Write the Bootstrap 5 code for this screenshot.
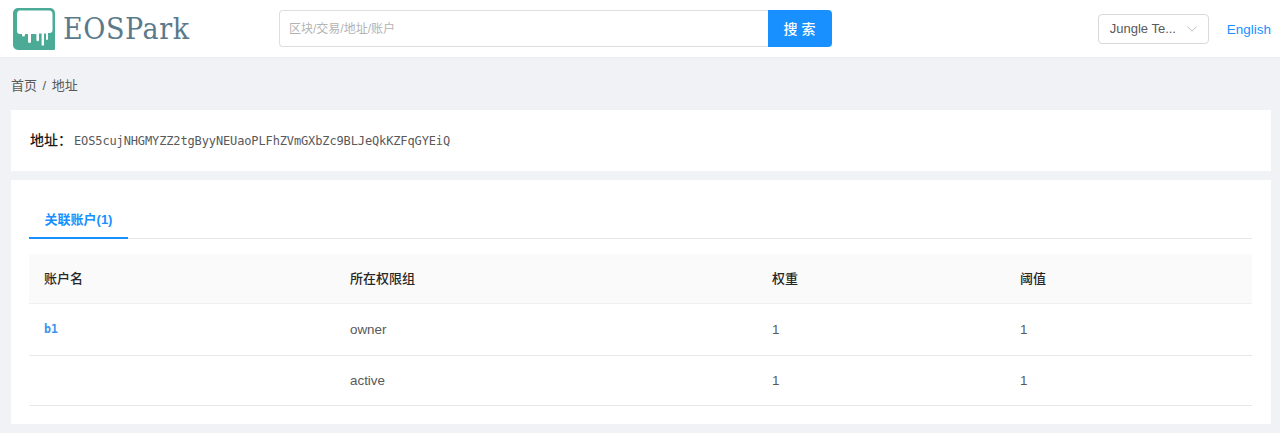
<!DOCTYPE html>
<html lang="zh">
<head>
<meta charset="utf-8">
<title>EOSPark</title>
<link rel="stylesheet" href="https://cdn.jsdelivr.net/npm/bootstrap@5.3.0/dist/css/bootstrap.min.css">
<style>
html,body{height:433px;overflow:hidden}
body{background:#f0f2f5;font-family:"Liberation Sans","Noto Sans CJK SC",sans-serif;font-size:13px;color:#595959}
.top-bar{height:57px;background:#fff;box-shadow:0 1px 2px rgba(0,0,0,.03);padding:0 9px 0 13px}
.brand-name{font-family:"DejaVu Serif Condensed","DejaVu Serif",serif;font-stretch:condensed;font-weight:400;font-size:30px;line-height:40px;color:#5a7a8b;margin-left:8px;white-space:nowrap;letter-spacing:.6px}
.brand-area{width:266px}
.search-box{width:553px;height:37px}
.search-input{flex:1;border:1px solid #dedede;border-right:0;border-radius:4px 0 0 4px;padding:1px 9px 0;font-size:12px;color:#b3b3b3;line-height:35px;background:#fff}
.search-btn{width:64px;background:#1890ff;color:#fff;border:0;border-radius:0 4px 4px 0;font-size:14px;font-weight:500;letter-spacing:4px;padding:2px 0 0 3px}
.net-select{width:111px;height:30px;border:1px solid #d9d9d9;border-radius:4px;padding:1px 11px 0;font-size:13px;line-height:28px;color:#595959;background:#fff}
.lang-link{color:#1890ff;font-size:13.500px;text-decoration:none;margin-left:18px;padding-top:3px}
.crumbs{height:53px;padding:4px 0 0 11px;font-size:13px}
.crumbs .sep{margin:0 5.500px}
.panel-box{background:#fff;margin:0 9px 0 11px}
.addr-panel{height:61px;padding:0 19px;margin-bottom:9px}
.addr-label{font-size:14px;font-weight:500;color:#1a1a1a}
.addr-code{font-family:"DejaVu Sans Mono","Liberation Mono",monospace;font-size:12px;color:#595959;margin-left:2px;letter-spacing:-.13px}
.acct-panel{height:244px;padding:20px 19px 0 18px}
.tab-strip{height:39px;border-bottom:1px solid #e8e8e8;margin-bottom:15px}
.tab-on{display:block;width:99px;height:39px;border-bottom:2px solid #1890ff;color:#1890ff;text-align:center;line-height:39px;font-size:13px;font-weight:600;text-decoration:none}
.acct-table{table-layout:fixed;width:1223px;margin:0;border-collapse:collapse;--bs-table-color:#595959;--bs-table-bg:transparent}
.acct-table th,.acct-table td{padding:0 15px;vertical-align:middle;font-size:13.400px;border-bottom:1px solid #e8e8e8;box-shadow:none}
.acct-table thead th{background:#fafafa;height:49px;font-size:13px;font-weight:500;color:#262626;border-bottom-color:#f0f0f0}
.acct-table .row-a td{height:52px;padding-top:3px}
.acct-table .row-b td{height:50px;padding-top:3px}
.acct-link{font-family:"DejaVu Sans Mono","Liberation Mono",monospace;font-size:11.500px;font-weight:700;color:#3a94ec;text-decoration:none;position:relative;top:-1px}
</style>
</head>
<body>
<header class="top-bar d-flex align-items-center">
  <div class="brand-area d-flex align-items-center flex-shrink-0">
    <svg width="42" height="42" viewBox="0 0 42 42" aria-hidden="true">
      <path d="M5 0H37a5 5 0 0 1 5 5V41a1 1 0 0 1-1 1H5a5 5 0 0 1-5-5V5a5 5 0 0 1 5-5z" fill="#4bab97"/>
      <path d="M6 2.500H36a3.500 3.500 0 0 1 3.500 3.500V22a3 3 0 0 1-3 3H35V31a1 1 0 0 1-2 0V25.500H31V36.500a1.200 1.200 0 0 1-2.400 0V25.500H26V32a1.300 1.300 0 0 1-2.600 0V26H18V33.500a1.500 1.500 0 0 1-3 0V26H12V27a1.500 1.500 0 0 1-3 0V26H7a3 3 0 0 1-3-3V6a3.500 3.500 0 0 1 2-3.500z" fill="#fff"/>
    </svg>
    <span class="brand-name">EOSPark</span>
  </div>
  <div class="search-box d-flex">
    <div class="search-input">区块/交易/地址/账户</div>
    <button type="button" class="search-btn">搜索</button>
  </div>
  <div class="ms-auto d-flex align-items-center">
    <div class="net-select d-flex justify-content-between align-items-center">
      <span>Jungle Te...</span>
      <svg width="10" height="6" viewBox="0 0 10 6" aria-hidden="true"><path d="M.5.7 5 5.200 9.500.7" fill="none" stroke="#bfbfbf" stroke-width="1"/></svg>
    </div>
    <a class="lang-link" href="#">English</a>
  </div>
</header>
<nav class="crumbs d-flex align-items-center"><span>首页</span><span class="sep">/</span><span>地址</span></nav>
<section class="panel-box addr-panel d-flex align-items-center">
  <span class="addr-label">地址：</span><span class="addr-code">EOS5cujNHGMYZZ2tgByyNEUaoPLFhZVmGXbZc9BLJeQkKZFqGYEiQ</span>
</section>
<section class="panel-box acct-panel">
  <div class="tab-strip"><a class="tab-on" href="#">关联账户(1)</a></div>
  <table class="table acct-table">
    <colgroup><col style="width:306px"><col style="width:422px"><col style="width:248px"><col style="width:247px"></colgroup>
    <thead><tr><th>账户名</th><th>所在权限组</th><th>权重</th><th>阈值</th></tr></thead>
    <tbody>
      <tr class="row-a"><td><a class="acct-link" href="#">b1</a></td><td>owner</td><td>1</td><td>1</td></tr>
      <tr class="row-b"><td></td><td>active</td><td>1</td><td>1</td></tr>
    </tbody>
  </table>
</section>
<script src="https://cdn.jsdelivr.net/npm/bootstrap@5.3.0/dist/js/bootstrap.bundle.min.js"></script>
</body>
</html>
